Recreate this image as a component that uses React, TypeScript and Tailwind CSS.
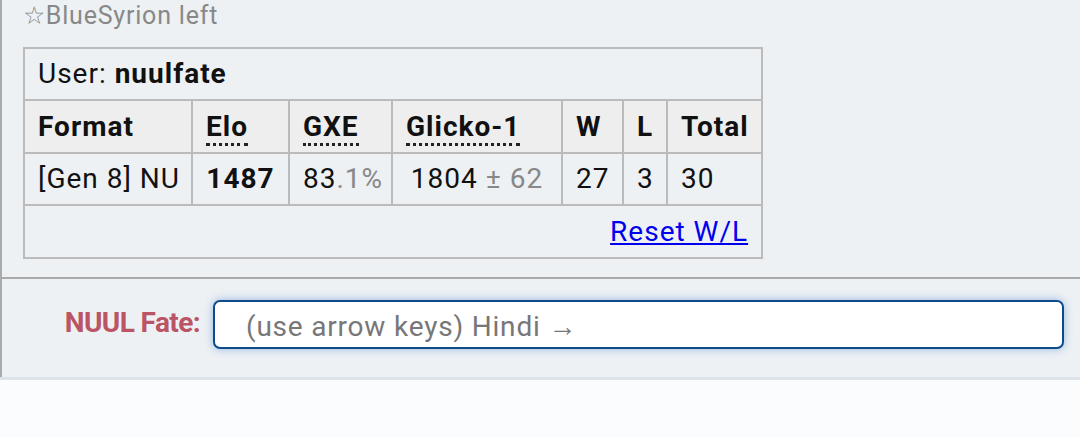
import React from "react";

const font = { fontFamily: "Roboto, 'Noto Sans', sans-serif" };

const cell = "border-2 border-[#bbbbbb] px-[13px]";

export default function App() {
  return (
    <div
      className="w-[1080px] h-[437px] bg-[#fbfcfe] overflow-hidden text-[28px] tracking-[1px] text-[#111]"
      style={font}
    >
      <div className="border-l-2 border-[#aaaaaa] bg-[#edf1f4]">
        <div className="h-[277px] pl-[21px]">
          <div className="leading-[32px] text-[25px] tracking-[0.8px] text-[#888888]">☆BlueSyrion left</div>
          <table className="mt-[15px] table-fixed border-collapse border-2 border-[#bbbbbb] w-[738px]">
            <colgroup>
              <col className="w-[168px]" />
              <col className="w-[97px]" />
              <col className="w-[103px]" />
              <col className="w-[170px]" />
              <col className="w-[61px]" />
              <col className="w-[44px]" />
              <col className="w-[95px]" />
            </colgroup>
            <tbody>
              <tr className="h-[52px]">
                <td colSpan={7} className={cell}>
                  User: <b>nuulfate</b>
                </td>
              </tr>
              <tr className="h-[53px] bg-[#eeeeee] font-bold">
                <th className={`${cell} text-left`}>Format</th>
                <th className={`${cell} text-left`}>
                  <span className="border-b-[3px] border-dotted border-[#222]">Elo</span>
                </th>
                <th className={`${cell} text-left`}>
                  <span className="border-b-[3px] border-dotted border-[#222]">GXE</span>
                </th>
                <th className={`${cell} text-left`}>
                  <span className="border-b-[3px] border-dotted border-[#222]">Glicko-1</span>
                </th>
                <th className={`${cell} text-left`}>W</th>
                <th className={`${cell} text-left`}>L</th>
                <th className={`${cell} text-left`}>Total</th>
              </tr>
              <tr className="h-[52px]">
                <td className={`${cell} whitespace-nowrap`}>[Gen 8] NU</td>
                <td className={`${cell} text-center font-bold`}>1487</td>
                <td className={`${cell} text-center`}>
                  83<span className="text-[#888888]">.1%</span>
                </td>
                <td className={`${cell} text-center whitespace-nowrap`}>
                  1804 <span className="text-[#888888]">± 62</span>
                </td>
                <td className={`${cell} text-center`}>27</td>
                <td className={`${cell} text-center`}>3</td>
                <td className={`${cell} text-left`}>30</td>
              </tr>
              <tr className="h-[53px]">
                <td colSpan={7} className={`${cell} text-right`}>
                  <a href="#" className="text-[#0000ee] underline">
                    Reset W/L
                  </a>
                </td>
              </tr>
            </tbody>
          </table>
        </div>
        <div className="border-t-2 border-[#aaaaaa] h-[100px] pt-[21px] flex items-start">
          <label className="w-[211px] h-[45px] shrink-0 pr-[13px] flex items-center justify-end font-bold tracking-[-0.6px] text-[#bb5464]">
            NUUL Fate:
          </label>
          <div className="w-[851px] h-[49px] bg-white border-2 border-[#0f4a8a] rounded-[7px] shadow-[0_0_8px_rgba(40,110,200,0.45)] flex items-center pl-[31px] pt-[4px] tracking-[0.8px] text-[#777777] whitespace-nowrap">
            (use arrow keys) Hindi <span className="ml-[8px]">→</span>
          </div>
        </div>
      </div>
      <div className="h-[3px] bg-[#dde3ea]"></div>
    </div>
  );
}
